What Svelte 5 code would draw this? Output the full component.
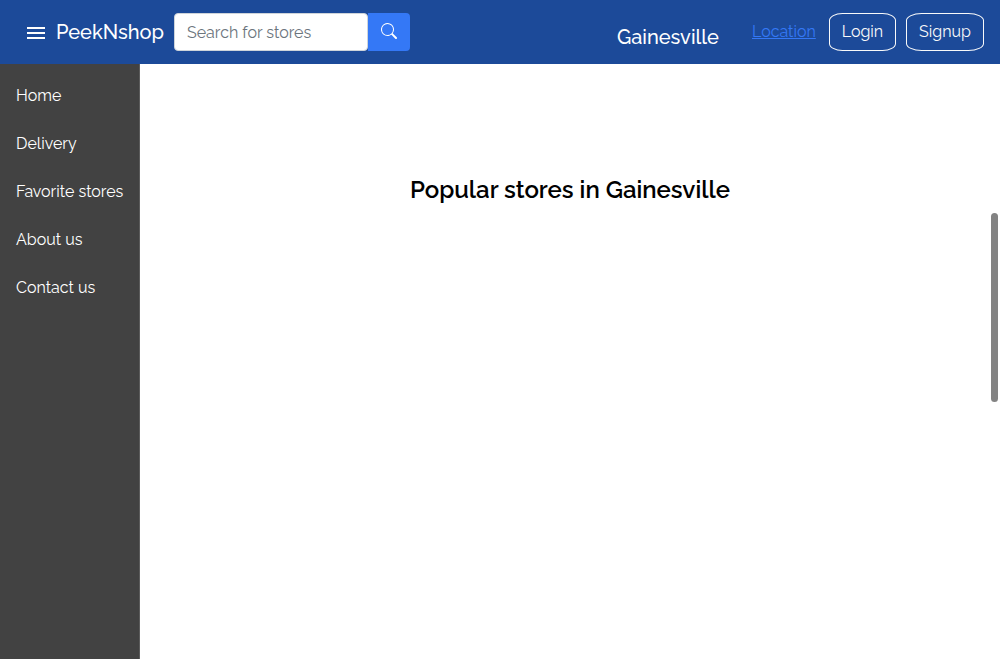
<script>
  const city = 'Gainesville';
  const links = ['Home', 'Delivery', 'Favorite stores', 'About us', 'Contact us'];
  let query = $state('');
</script>

<div class="page">
  <header>
    <button class="menu" aria-label="Menu">
      <svg width="24" height="24" viewBox="0 0 24 24" fill="currentColor" aria-hidden="true">
        <path d="M3 18h18v-2H3v2zm0-5h18v-2H3v2zm0-7v2h18V6H3z" />
      </svg>
    </button>
    <a class="brand" href="#home">PeekNshop</a>
    <form role="search" onsubmit={(e) => e.preventDefault()}>
      <input type="search" aria-label="Search for stores" placeholder="Search for stores" bind:value={query} />
      <button class="find" aria-label="Search">
        <svg width="16" height="16" viewBox="0 0 16 16" fill="currentColor" aria-hidden="true">
          <path d="M11.742 10.344a6.5 6.5 0 1 0-1.397 1.398h-.001c.03.04.062.078.098.115l3.85 3.85a1 1 0 0 0 1.415-1.414l-3.85-3.85a1.007 1.007 0 0 0-.115-.1zM12 6.5a5.5 5.5 0 1 1-11 0 5.5 5.5 0 0 1 11 0z" />
        </svg>
      </button>
    </form>
    <span class="city">{city}</span>
    <a class="location" href="#location">Location</a>
    <button class="account login">Login</button>
    <button class="account signup">Signup</button>
  </header>

  <div class="body">
    <nav>
      {#each links as link}
        <a href="#{link.toLowerCase().replace(' ', '-')}">{link}</a>
      {/each}
    </nav>
    <main>
      <h1>Popular stores in {city}</h1>
    </main>
  </div>
  <div class="thumb"></div>
</div>

<style>
  :global(body) {
    margin: 0;
    background: #fff;
  }
  .page {
    position: relative;
    box-sizing: border-box;
    min-height: 100vh;
    padding-bottom: 1px;
    display: flex;
    flex-direction: column;
    font: 400 16px/24px Raleway, Lato, sans-serif;
  }
  button,
  input {
    font: inherit;
    box-sizing: border-box;
  }
  button {
    cursor: pointer;
  }
  header {
    display: flex;
    align-items: center;
    box-sizing: border-box;
    height: 64px;
    padding: 0 16px 0 24px;
    background: #1c4a99;
    color: #fff;
  }
  .menu {
    display: flex;
    padding: 2px 0 0;
    border: 0;
    background: none;
    color: inherit;
  }
  .brand {
    width: 110px;
    margin-left: 8px;
    font-size: 20px;
    font-weight: 500;
    color: inherit;
    text-decoration: none;
  }
  form {
    display: flex;
    margin-left: 8px;
  }
  input {
    width: 194px;
    height: 38px;
    padding: 6px 12px;
    border: 1px solid #ced4da;
    border-radius: 4px;
    background: #fff;
    color: #212529;
    appearance: none;
    outline: none;
  }
  input::placeholder {
    color: #6c757d;
    opacity: 1;
  }
  .find {
    display: flex;
    align-items: center;
    justify-content: center;
    width: 42px;
    height: 38px;
    padding: 0 0 2px;
    border: 0;
    border-radius: 0 4px 4px 0;
    background: #3478f6;
    color: #fff;
  }
  .city {
    width: 103px;
    margin-left: auto;
    padding-top: 10px;
    font-size: 20px;
    font-weight: 500;
  }
  .location {
    width: 65px;
    margin-left: 32px;
    color: #3478f6;
    text-decoration: underline;
  }
  .account {
    height: 38px;
    padding: 0;
    border: 1px solid #f8f9fa;
    border-radius: 20%;
    background: none;
    color: #f8f9fa;
  }
  .login {
    width: 67px;
    margin-left: 12px;
  }
  .signup {
    width: 78px;
    margin-left: 10px;
  }
  .body {
    flex: 1;
    display: flex;
  }
  nav {
    box-sizing: border-box;
    width: 140px;
    padding-top: 8px;
    background: #424242;
    border-right: 1px solid #5c5c5c;
  }
  nav a {
    display: block;
    padding: 12px 0 12px 16px;
    white-space: nowrap;
    color: #fff;
    text-decoration: none;
  }
  main {
    flex: 1;
    padding-top: 110px;
    text-align: center;
  }
  h1 {
    margin: 0;
    font-size: 24px;
    line-height: 32px;
    font-weight: 600;
    color: #000;
  }
  .thumb {
    position: absolute;
    top: 213px;
    right: 2px;
    width: 7px;
    height: 189px;
    border-radius: 4px;
    background: #838383;
  }
</style>
